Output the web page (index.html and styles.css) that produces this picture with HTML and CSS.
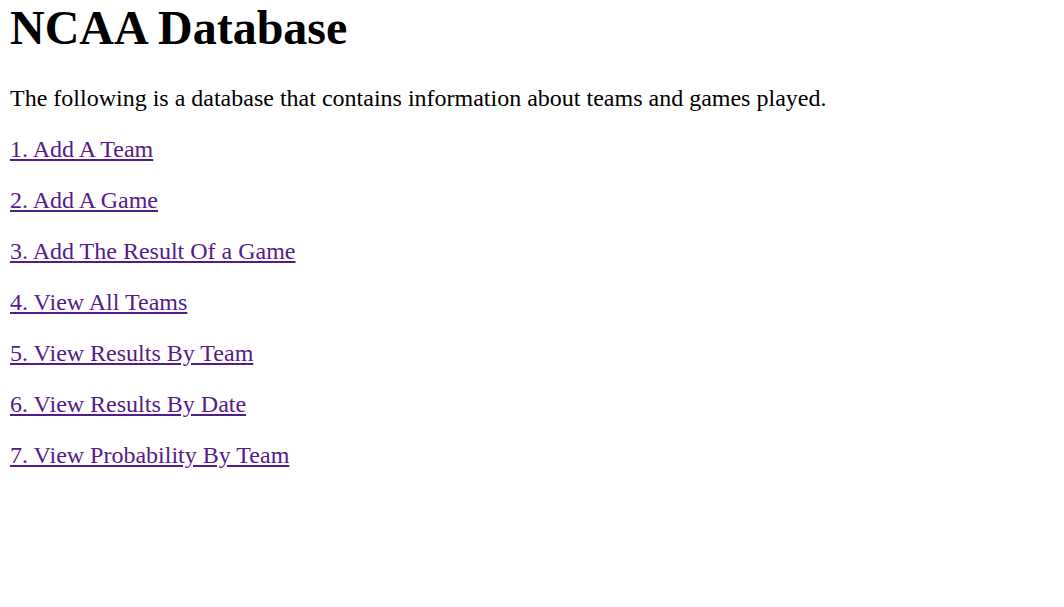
FILE: index.html
```html
<!DOCTYPE html>
<html>
<head>
<meta charset="utf-8">
<title>NCAA Database</title>
<link rel="stylesheet" href="styles.css">
</head>
<body class="page">
<h1 class="title">NCAA Database</h1>
<p class="intro">The following is a database that contains information about teams and games played.</p>
<p class="item"><a class="link" href="#">1. Add A Team</a></p>
<p class="item"><a class="link" href="#">2. Add A Game</a></p>
<p class="item"><a class="link" href="#">3. Add The Result Of a Game</a></p>
<p class="item"><a class="link" href="#">4. View All Teams</a></p>
<p class="item"><a class="link" href="#">5. View Results By Team</a></p>
<p class="item"><a class="link" href="#">6. View Results By Date</a></p>
<p class="item"><a class="link" href="#">7. View Probability By Team</a></p>
</body>
</html>
```
FILE: styles.css
```css
.page {
  margin: 0 10px;
  font-family: "Liberation Serif", "Times New Roman", serif;
  font-size: 24px;
  color: #000;
  background: #fff;
}
.title {
  font-size: 48px;
  font-weight: bold;
  margin: 0 0 30px;
}
.intro, .item {
  margin: 24px 0;
}
.link {
  color: #551a8b;
  text-decoration: underline;
}
```
